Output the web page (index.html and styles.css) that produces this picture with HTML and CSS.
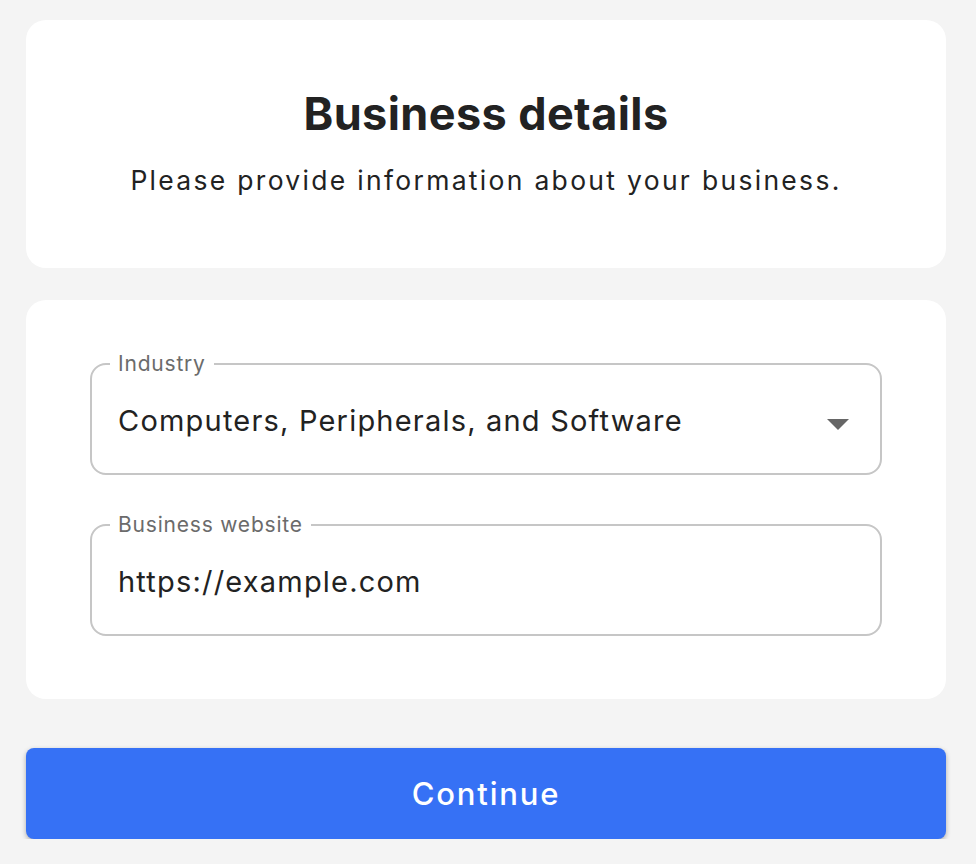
FILE: index.html
```html
<!DOCTYPE html>
<html lang="en">
<head>
<meta charset="utf-8">
<title>Business details</title>
<link rel="stylesheet" href="styles.css">
</head>
<body>
<main class="page">
  <section class="card header-card">
    <h1 class="title">Business details</h1>
    <p class="subtitle">Please provide information about your business.</p>
  </section>
  <section class="card form-card">
    <fieldset class="field">
      <legend class="field-label">Industry</legend>
      <div class="field-row">
        <span class="field-value">Computers, Peripherals, and Software</span>
        <span class="caret"></span>
      </div>
    </fieldset>
    <fieldset class="field">
      <legend class="field-label">Business website</legend>
      <div class="field-row">
        <span class="field-value">https://example.com</span>
      </div>
    </fieldset>
  </section>
  <button class="continue" type="button">Continue</button>
</main>
</body>
</html>
```
FILE: styles.css
```css
html, body {
  margin: 0;
  padding: 0;
  background: #f4f4f4;
}
body {
  font-family: Inter, "Noto Sans", sans-serif;
  color: #222;
}
.page {
  padding: 20px 30px 0 26px;
  display: flex;
  flex-direction: column;
}
.card {
  background: #fff;
  border-radius: 20px;
}
.header-card {
  height: 248px;
  box-sizing: border-box;
  padding-top: 64px;
  text-align: center;
}
.title {
  margin: 0;
  font-size: 45px;
  line-height: 60px;
  font-weight: 700;
  letter-spacing: 0.4px;
}
.subtitle {
  margin: 20px 0 0;
  font-size: 26.5px;
  line-height: 32px;
  font-weight: 400;
  letter-spacing: 2.3px;
}
.form-card {
  margin-top: 32px;
  padding: 52px 64px 63px 64px;
  display: flex;
  flex-direction: column;
  gap: 38px;
}
.field {
  margin: 0;
  border: 2px solid #c6c6c6;
  border-radius: 16px;
  padding: 27px 31px 34px 26px;
  min-width: 0;
}
.field-label {
  padding: 0 8px;
  margin-left: -8px;
  font-size: 21px;
  line-height: 24px;
  letter-spacing: 0.8px;
  color: #6b6b6b;
}
.field-row {
  display: flex;
  align-items: center;
  justify-content: space-between;
  height: 36px;
}
.field-value {
  font-size: 29px;
  line-height: 36px;
  letter-spacing: 1.2px;
  color: #222;
}
.caret {
  margin-top: 6px;
  width: 0;
  height: 0;
  border-left: 11px solid transparent;
  border-right: 11px solid transparent;
  border-top: 11px solid #666;
}
.continue {
  margin-top: 49px;
  height: 91px;
  border: 0;
  border-radius: 8px;
  background: #3671f5;
  color: #fff;
  font-family: Inter, "Noto Sans", sans-serif;
  font-size: 31px;
  font-weight: 500;
  letter-spacing: 1.8px;
  box-shadow: 0 2px 5px rgba(0, 0, 0, 0.3);
  cursor: pointer;
}
```
